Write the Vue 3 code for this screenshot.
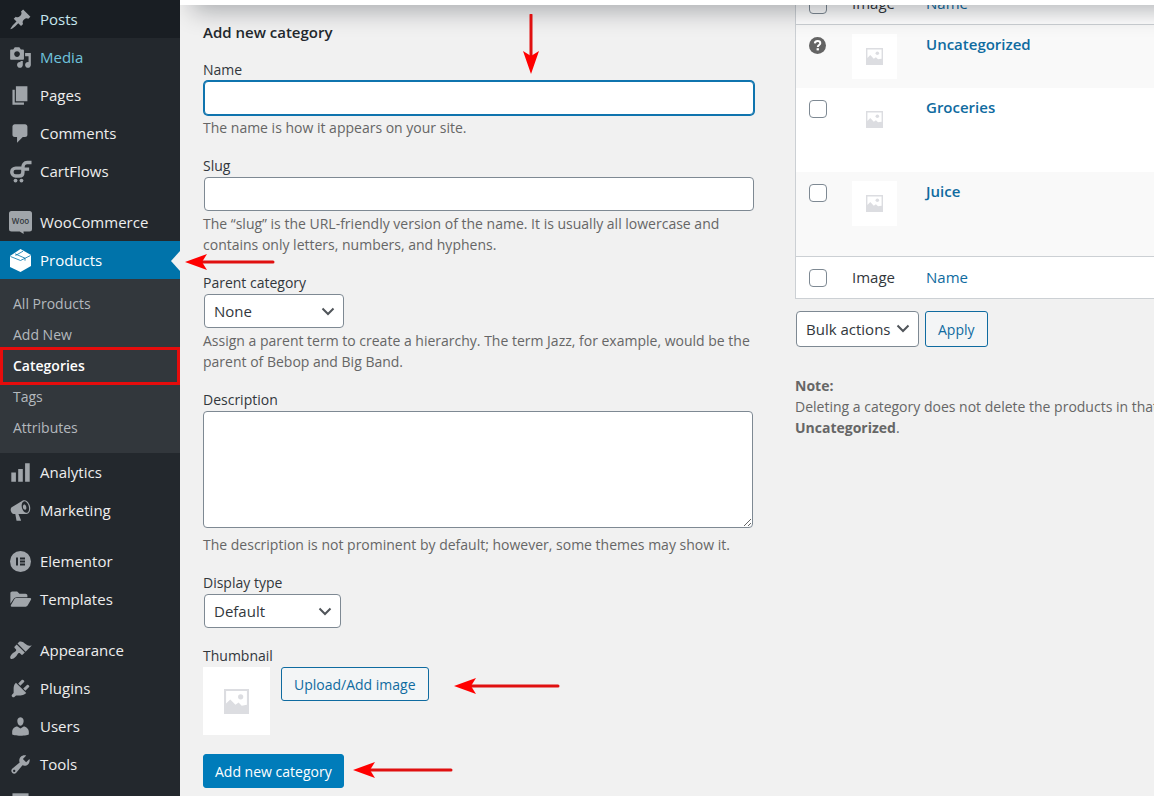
<script setup>
import { ref } from 'vue'

const icons = {
  post: 'M10.44 3.02l1.82-1.82 6.36 6.35-1.83 1.82c-1.05-.68-2.48-.57-3.41.36l-.75.75c-.92.93-1.04 2.35-.35 3.41l-1.83 1.82-2.41-2.41-2.8 2.79c-.42.42-3.38 2.71-3.8 2.29s1.86-3.39 2.28-3.81l2.79-2.79L4.1 9.36l1.83-1.82c1.05.69 2.48.57 3.4-.36l.75-.75c.93-.92 1.05-2.35.36-3.41z',
  media: 'M13 11V4c0-.55-.45-1-1-1h-1.67L9 1H5L3.67 3H2c-.55 0-1 .45-1 1v7c0 .55.45 1 1 1h10c.55 0 1-.45 1-1zM7 4.5c1.38 0 2.5 1.12 2.5 2.5S8.38 9.5 7 9.5 4.5 8.38 4.5 7 5.62 4.5 7 4.5zM14 6h5v10.5c0 1.38-1.12 2.5-2.5 2.5S14 17.88 14 16.5s1.12-2.5 2.5-2.5c.17 0 .34.02.5.05V9h-3V6zm-4 8.05V13h2v3.5c0 1.38-1.12 2.5-2.5 2.5S7 17.88 7 16.5 8.12 14 9.5 14c.17 0 .34.02.5.05z',
  page: 'M6 15V2h10v13H6zm-1 1h8v2H3V5h2v11z',
  comments: 'M5 2h9c1.1 0 2 .9 2 2v7c0 1.1-.9 2-2 2h-2l-5 5v-5H5c-1.1 0-2-.9-2-2V4c0-1.1.9-2 2-2z',
  chart: 'M18 18V2h-4v16h4zm-6 0V7H8v11h4zm-6 0v-8H2v8h4z',
  megaphone: 'M18.15 5.94c.46 1.62.38 3.22-.02 4.48-.42 1.28-1.26 2.18-2.3 2.48-.16.06-.26.06-.4.06-.06.02-.12.02-.18.02-.06.02-.14.02-.22.02h-6.8l2.22 5.5c.02.14-.06.26-.14.34-.08.1-.24.16-.34.16H6.95c-.1 0-.26-.06-.34-.16-.08-.08-.16-.2-.14-.34l-1-5.5H4.25l-.02-.02c-.5.06-1.08-.18-1.54-.62s-.88-1.08-1.06-1.88c-.24-.8-.2-1.56-.02-2.2.18-.62.58-1.08 1.06-1.3l.02-.02 9-5.4c.1-.06.18-.1.24-.16.06-.04.14-.08.24-.12.16-.08.28-.12.5-.18 1.04-.3 2.24.1 3.22.98s1.84 2.24 2.26 3.86zm-2.58 5.98h-.02c.4-.1.74-.34 1.04-.7.58-.7.86-1.76.86-3.04 0-.64-.1-1.3-.28-1.98-.34-1.36-1.02-2.5-1.78-3.24s-1.68-1.1-2.46-.88c-.82.22-1.4.96-1.7 2-.32 1.04-.28 2.36.06 3.72.38 1.36 1 2.5 1.8 3.24.78.74 1.62 1.1 2.48.88zm-2.54-7.08c.22-.04.42-.02.62.04.38.16.76.48 1.02 1s.42 1.2.42 1.78c0 .3-.04.56-.12.8-.18.48-.44.84-.86.94-.34.1-.8-.06-1.14-.4s-.64-.86-.78-1.5c-.18-.62-.12-1.24.02-1.72s.48-.84.82-.94z',
  folder: 'M1.2 13.8V4.6c0-.9.7-1.6 1.6-1.6h4.3l2 2h5.300c.9 0 1.600.7 1.600 1.600v1.400H6.800c-1.200 0-2.200.6-2.800 1.600zM2.300 16.200c-.6 0-1-.7-.7-1.200l3-5.200c.4-.6 1-1 1.700-1h12.200c.6 0 1 .7.7 1.200l-3 5.200c-.4.6-1 1-1.700 1z',
  appearance: 'M14.48 11.06L7.41 3.99l1.5-1.5c.5-.56 2.3-.47 3.51.32 1.21.8 1.43 1.28 2.91 2.1 1.18.64 2.45 1.26 4.45.85zm-.71.71L6.7 4.7 4.93 6.47c-.39.39-.39 1.02 0 1.41l1.06 1.06c.39.39.39 1.03 0 1.42-.6.6-1.43 1.11-2.21 1.69-.35.26-.7.53-1.01.84C1.43 14.23.4 16.08 1.4 17.07c.99 1 2.84-.03 4.18-1.36.31-.31.58-.66.85-1.02.57-.78 1.08-1.61 1.69-2.21.39-.39 1.02-.39 1.41 0l1.06 1.06c.39.39 1.02.39 1.41 0z',
  plugins: 'M13.11 4.36L9.87 7.6 8 5.73l3.24-3.24c.35-.34 1.05-.2 1.56.32.52.51.66 1.21.31 1.55zm-8 1.77l.91-1.12 9.01 9.01-1.19.84c-.71.71-2.63 1.16-3.82 1.16H6.14L4.9 17.26c-.59.59-1.54.59-2.12 0-.59-.58-.59-1.53 0-2.12l1.24-1.24v-3.88c0-1.13.4-3.19 1.09-3.89zm7.26 3.97l3.24-3.24c.34-.35 1.04-.21 1.55.31.52.51.66 1.21.31 1.55l-3.24 3.25z',
  users: 'M10 9.25c-2.27 0-2.73-3.44-2.73-3.44C7 4.02 7.82 2 9.97 2c2.16 0 2.98 2.02 2.71 3.81 0 0-.41 3.44-2.68 3.44zm0 2.57L12.72 10c2.39 0 4.52 2.33 4.52 4.53v2.49s-3.65 1.13-7.24 1.13c-3.65 0-7.24-1.13-7.24-1.13v-2.49c0-2.25 1.94-4.48 4.47-4.48z',
  tools: 'M16.68 9.77c-1.34 1.34-3.3 1.67-4.95.99l-5.41 6.52c-.99.99-2.59.99-3.58 0s-.99-2.59 0-3.57l6.52-5.42c-.68-1.65-.35-3.61.99-4.95 1.28-1.28 3.12-1.62 4.72-1.06l-2.89 2.89 2.82 2.82 2.86-2.87c.53 1.58.18 3.39-1.08 4.65zM3.81 16.21c.4.39 1.04.39 1.43 0 .4-.4.4-1.04 0-1.43-.39-.4-1.03-.4-1.43 0-.39.39-.39 1.03 0 1.43z',
  settings: 'M3 2h14v16H3z',
}

const menu = [
  { label: 'Posts', icon: 'post', state: 'pressed' },
  { label: 'Media', icon: 'media', state: 'hovered' },
  { label: 'Pages', icon: 'page' },
  { label: 'Comments', icon: 'comments' },
  { label: 'CartFlows', icon: 'cartflows' },
  { label: 'WooCommerce', icon: 'woo', spaced: true },
  {
    label: 'Products',
    icon: 'products',
    state: 'current',
    children: ['All Products', 'Add New', 'Categories', 'Tags', 'Attributes'],
  },
  { label: 'Analytics', icon: 'chart' },
  { label: 'Marketing', icon: 'megaphone' },
  { label: 'Elementor', icon: 'elementor', spaced: true },
  { label: 'Templates', icon: 'folder' },
  { label: 'Appearance', icon: 'appearance', spaced: true },
  { label: 'Plugins', icon: 'plugins' },
  { label: 'Users', icon: 'users' },
  { label: 'Tools', icon: 'tools' },
  { label: '', icon: 'settings' },
]

const categories = [
  { name: 'Uncategorized', fixed: true },
  { name: 'Groceries' },
  { name: 'Juice' },
]

const placeholder = 'M0 0h24v24H0zM2 2v12l4-4 5 5 3-2 3 3 5-1V2z'
const name = ref('')
const slug = ref('')
const description = ref('')
</script>

<template>
  <div class="screen">
    <nav class="sidebar" aria-label="Main menu">
      <ul class="menu">
        <li v-for="item in menu" :key="item.icon" :class="{ spaced: item.spaced }">
          <a href="#" class="item" :class="item.state" :aria-label="item.label || 'Settings'">
            <svg v-if="icons[item.icon]" class="icon" viewBox="0 0 20 20" aria-hidden="true">
              <path :d="icons[item.icon]" fill="currentColor" fill-rule="evenodd" />
            </svg>
            <svg v-else-if="item.icon === 'cartflows'" class="icon" viewBox="0 0 24 24" aria-hidden="true">
              <path d="M13 8.500H7a4 4 0 0 0 0 8.200h3.500c2.600 0 4-1.400 4-4V8c0-3.200 1.500-5.300 4.500-5.300h4.500M15 9.500h6" fill="none" stroke="currentColor" stroke-width="3.600" />
              <circle cx="6.800" cy="21.500" r="2" fill="currentColor" />
              <circle cx="13" cy="21.500" r="2" fill="currentColor" />
            </svg>
            <svg v-else-if="item.icon === 'woo'" class="icon" viewBox="0 0 23 23" aria-hidden="true">
              <path d="M2.500 0h18A2.500 2.500 0 0 1 23 2.500v15.500a2.500 2.500 0 0 1-2.500 2.500h-6l.2 2.500-4-2.500h-8.200A2.500 2.500 0 0 1 0 18v-15.500A2.500 2.500 0 0 1 2.500 0z" fill="currentColor" />
              <text x="11.500" y="13" class="woo-text">Woo</text>
            </svg>
            <svg v-else-if="item.icon === 'products'" class="icon" viewBox="0 0 23 23" aria-hidden="true">
              <path d="M11.500 0 22 6v11L11.500 23 1 18V7z" fill="currentColor" />
              <path d="M1.500 7.500 11.500 11.500 21.500 6.500M6 4.800l10 4.400v2.500M14 2.200 6.500 6.500" fill="none" stroke="#0073aa" stroke-width=".8" />
            </svg>
            <svg v-else class="icon" viewBox="0 0 23 23" aria-hidden="true">
              <circle cx="11.500" cy="11.500" r="10.500" fill="currentColor" />
              <path d="M7 7.500h2v8H7zM11 7.500h5v2h-5zM11 10.500h5v2h-5zM11 13.500h5v2h-5z" fill="#23282d" />
            </svg>
            <span>{{ item.label }}</span>
          </a>
          <ul v-if="item.children" class="submenu">
            <li v-for="child in item.children" :key="child">
              <a href="#" :class="{ active: child === 'Categories' }">{{ child }}</a>
            </li>
          </ul>
        </li>
      </ul>
    </nav>

    <main class="main">
      <div class="topbar"></div>
      <form class="form" @submit.prevent>
        <h2>Add new category</h2>
        <div class="field">
          <label for="cat-name">Name</label>
          <input id="cat-name" v-model="name" type="text" class="control focused" />
          <p>The name is how it appears on your site.</p>
        </div>
        <div class="field">
          <label for="cat-slug">Slug</label>
          <input id="cat-slug" v-model="slug" type="text" class="control" />
          <p>The “slug” is the URL-friendly version of the name. It is usually all lowercase and contains only letters, numbers, and hyphens.</p>
        </div>
        <div class="field">
          <label for="cat-parent">Parent category</label>
          <div class="select parent">
            <select id="cat-parent"><option>None</option></select>
            <svg viewBox="0 0 14 9" aria-hidden="true"><path d="M1.500 1.500 7 7l5.500-5.500" /></svg>
          </div>
          <p>Assign a parent term to create a hierarchy. The term Jazz, for example, would be the parent of Bebop and Big Band.</p>
        </div>
        <div class="field">
          <label for="cat-desc">Description</label>
          <textarea id="cat-desc" v-model="description"></textarea>
          <p class="after-area">The description is not prominent by default; however, some themes may show it.</p>
        </div>
        <div class="field">
          <label for="cat-display">Display type</label>
          <div class="select display">
            <select id="cat-display"><option>Default</option></select>
            <svg viewBox="0 0 14 9" aria-hidden="true"><path d="M1.500 1.500 7 7l5.500-5.500" /></svg>
          </div>
        </div>
        <div class="field">
          <label for="cat-upload">Thumbnail</label>
          <div class="thumb-row">
            <div class="thumb large">
              <svg viewBox="0 0 24 24" aria-hidden="true">
                <path :d="placeholder" fill-rule="evenodd" /><circle cx="16" cy="7.500" r="2.500" />
              </svg>
            </div>
            <button id="cat-upload" type="button" class="button">Upload/Add image</button>
          </div>
        </div>
        <button type="submit" class="button primary">Add new category</button>
      </form>

      <section class="list">
        <table>
          <colgroup><col class="col-check" /><col class="col-image" /><col /></colgroup>
          <thead>
            <tr>
              <td><input type="checkbox" aria-label="Select all" /></td>
              <th scope="col">Image</th>
              <th scope="col"><a href="#">Name</a></th>
            </tr>
          </thead>
          <tbody>
            <tr v-for="cat in categories" :key="cat.name" :class="{ short: cat.fixed }">
              <td>
                <svg v-if="cat.fixed" class="help" viewBox="0 0 17 17" aria-hidden="true">
                  <circle cx="8.500" cy="8.500" r="8.500" />
                  <path d="M5.800 6.300c.2-1.700 1.300-2.400 2.800-2.400 1.600 0 2.700.9 2.700 2.300 0 1.700-2.500 1.800-2.500 3.700" />
                  <rect x="7.600" y="11.200" width="2.300" height="2.200" />
                </svg>
                <input v-else type="checkbox" :aria-label="'Select ' + cat.name" />
              </td>
              <td>
                <div class="thumb">
                  <svg viewBox="0 0 24 24" aria-hidden="true">
                    <path :d="placeholder" fill-rule="evenodd" /><circle cx="16" cy="7.500" r="2.500" />
                  </svg>
                </div>
              </td>
              <td><a href="#" class="cat-link">{{ cat.name }}</a></td>
            </tr>
          </tbody>
          <tfoot>
            <tr>
              <td><input type="checkbox" aria-label="Select all" /></td>
              <th scope="col">Image</th>
              <th scope="col"><a href="#">Name</a></th>
            </tr>
          </tfoot>
        </table>
        <div class="bulk">
          <div class="select bulk-select">
            <select aria-label="Bulk actions"><option>Bulk actions</option></select>
            <svg viewBox="0 0 14 9" aria-hidden="true"><path d="M1.500 1.500 7 7l5.500-5.500" /></svg>
          </div>
          <button type="button" class="button">Apply</button>
        </div>
        <p class="note">
          <strong>Note:</strong><br />Deleting a category does not delete the products in that<br /><strong>Uncategorized</strong>.
        </p>
      </section>
    </main>

    <svg class="arrow to-name" viewBox="0 0 18 60" aria-hidden="true">
      <path d="M9 1v44" /><path class="head" d="M9 60 1 37l8 5 8-5z" />
    </svg>
    <svg class="arrow to-products" viewBox="0 0 90 18" aria-hidden="true">
      <path d="M88 9H16" /><path class="head" d="M0 9 22 1l-5 8 5 8z" />
    </svg>
    <svg class="arrow to-upload" viewBox="0 0 106 18" aria-hidden="true">
      <path d="M104 9H16" /><path class="head" d="M0 9 22 1l-5 8 5 8z" />
    </svg>
    <svg class="arrow to-submit" viewBox="0 0 100 18" aria-hidden="true">
      <path d="M98 9H16" /><path class="head" d="M0 9 22 1l-5 8 5 8z" />
    </svg>
  </div>
</template>

<style>
body {
  background: #f1f1f1;
}
</style>

<style scoped>
* {
  box-sizing: border-box;
}
.screen {
  position: relative;
  display: flex;
  height: 100vh;
  overflow: hidden;
  font: 14px/21px "Open Sans", "Noto Sans", sans-serif;
  color: #32373c;
  background: #f1f1f1;
}
a {
  color: #0f6ba0;
  text-decoration: none;
}

/* Sidebar */
.sidebar {
  flex: 0 0 180px;
  background: #23282d;
}
ul {
  margin: 0;
  padding: 0;
  list-style: none;
}
.spaced {
  margin-top: 13px;
}
.item {
  position: relative;
  display: flex;
  align-items: center;
  gap: 8px;
  height: 38px;
  padding-left: 9px;
  color: #eee;
  font-size: 15px;
}
.icon {
  flex: none;
  width: 23px;
  height: 23px;
  color: #a0a5aa;
}
.woo-text {
  font: 600 8px "Open Sans", sans-serif;
  text-anchor: middle;
  fill: #32373c;
}
.pressed {
  background: #191e23;
  color: #c6e6ee;
}
.hovered {
  color: #6fc3dd;
}
.current {
  background: #0073aa;
  color: #fff;
}
.current .icon {
  color: #fff;
}
.current::after {
  content: "";
  position: absolute;
  right: 0;
  top: 10px;
  border: 10px solid transparent;
  border-left: 0;
  border-right: 9px solid #f1f1f1;
}
.submenu {
  padding: 9px 0 10px;
  background: #32373c;
}
.submenu a {
  position: relative;
  display: block;
  height: 31px;
  padding-left: 13px;
  line-height: 31px;
  color: #b4b9be;
}
.submenu .active {
  color: #fff;
  font-weight: 600;
}
.submenu .active::after {
  content: "";
  position: absolute;
  inset: -3px 0 -4px;
  border: 3px solid #e60c0c;
}

/* Content */
.main {
  position: relative;
  flex: 1;
  min-width: 0;
  display: grid;
  grid-template-columns: minmax(0, 552fr) minmax(0, 359fr);
  gap: 40px;
  padding-left: 23px;
  overflow: hidden;
}
.topbar {
  position: absolute;
  left: 0;
  right: -40px;
  top: -60px;
  height: 65px;
  background: #fff;
  box-shadow: 12px 6px 24px rgba(0, 10, 20, 0.3);
}
.form {
  padding-top: 22px;
}
h2 {
  margin: 0 0 16px;
  font-size: 15px;
  line-height: 21px;
  font-weight: 600;
  color: #23282d;
}
.field {
  margin-bottom: 17px;
}
label {
  display: block;
}
p {
  margin: 0;
  padding-top: 1px;
  color: #666;
}
.control {
  display: block;
  width: calc(100% - 2px);
  height: 34px;
  margin: 1px;
  padding: 0 8px;
  border: 1px solid #7e8993;
  border-radius: 4px;
  background: #fff;
  font: inherit;
}
.focused {
  border-color: #0f74ae;
  box-shadow: 0 0 0 1px #0f74ae;
  outline: none;
}
.select {
  position: relative;
  height: 34px;
  margin: 1px;
}
.select select {
  display: block;
  appearance: none;
  width: 100%;
  height: 100%;
  padding: 0 0 0 9px;
  border: 1px solid #7e8993;
  border-radius: 4px;
  background: #fff;
  color: #32373c;
  font: inherit;
  font-size: 15px;
}
.select svg {
  position: absolute;
  right: 9px;
  top: 13px;
  width: 14px;
  height: 9px;
  fill: none;
  stroke: #50555a;
  stroke-width: 2;
  pointer-events: none;
}
.parent {
  width: 140px;
}
.display {
  width: 137px;
}
textarea {
  display: block;
  width: calc(100% - 2px);
  height: 117px;
  margin: 1px 0 0;
  border: 1px solid #7e8993;
  border-radius: 4px;
  background: #fff;
  font: inherit;
  resize: vertical;
}
.after-area {
  margin-top: 5px;
}
.thumb-row {
  display: flex;
  align-items: flex-start;
  gap: 11px;
  margin-top: 1px;
}
.thumb {
  display: flex;
  align-items: center;
  justify-content: center;
  width: 45px;
  height: 45px;
  background: #fff;
}
.thumb svg {
  width: 17px;
  height: 17px;
  fill: #dcdde1;
}
.thumb.large {
  width: 67px;
  height: 68px;
}
.thumb.large svg {
  width: 25px;
  height: 25px;
}
.button {
  height: 34px;
  padding: 0 12px;
  border: 1px solid #0f6ba0;
  border-radius: 3px;
  background: #f3f5f6;
  color: #0f6ba0;
  font: inherit;
}
.button.primary {
  margin-top: 2px;
  padding: 0 11px;
  background: #007cba;
  border-color: #007cba;
  color: #fff;
}

/* Category list */
.list {
  margin-top: -18px;
}
table {
  width: calc(100% + 20px);
  table-layout: fixed;
  border: 1px solid #ccd0d4;
  border-spacing: 0;
  background: #fff;
}
.col-check {
  width: 46px;
}
.col-image {
  width: 74px;
}
th,
td {
  padding: 9px 10px;
  text-align: left;
  vertical-align: top;
  font-weight: 400;
}
th {
  font-size: 15px;
}
thead td,
thead th {
  height: 42px;
  padding-top: 10px;
  border-bottom: 1px solid #ccd0d4;
}
tfoot td,
tfoot th {
  height: 42px;
  border-top: 1px solid #ccd0d4;
  vertical-align: middle;
}
tbody tr {
  height: 84px;
}
tbody tr.short {
  height: 63px;
}
tbody tr:nth-child(odd) {
  background: #f9f9f9;
}
table input {
  display: block;
  appearance: none;
  width: 18px;
  height: 18px;
  margin: 3px 0 0 3px;
  border: 1px solid #7e8993;
  border-radius: 4px;
  background: #fff;
}
tfoot input {
  margin-top: 0;
}
.help {
  display: block;
  width: 17px;
  height: 17px;
  margin: 3px 0 0 3px;
  fill: #646464;
}
.help path {
  fill: none;
  stroke: #fff;
  stroke-width: 2;
}
.help rect {
  fill: #fff;
}
.cat-link {
  font-size: 15px;
  font-weight: 600;
}
.bulk {
  display: flex;
  gap: 6px;
  margin-top: 12px;
  padding-left: 1px;
}
.bulk .select {
  width: 123px;
  height: 36px;
  margin: 0;
}
.bulk .button {
  height: 36px;
}
.note {
  margin-top: 27px;
  white-space: nowrap;
}

/* Annotation arrows */
.arrow {
  position: absolute;
  fill: none;
  stroke: #e01010;
  stroke-width: 3;
  stroke-linecap: round;
}
.arrow .head {
  fill: #f00;
  stroke: none;
}
.to-name {
  left: 522px;
  top: 14px;
  width: 18px;
  height: 60px;
}
.to-products {
  left: 185px;
  top: 253px;
  width: 90px;
  height: 18px;
}
.to-upload {
  left: 454px;
  top: 677px;
  width: 106px;
  height: 18px;
}
.to-submit {
  left: 353px;
  top: 761px;
  width: 100px;
  height: 18px;
}
</style>
